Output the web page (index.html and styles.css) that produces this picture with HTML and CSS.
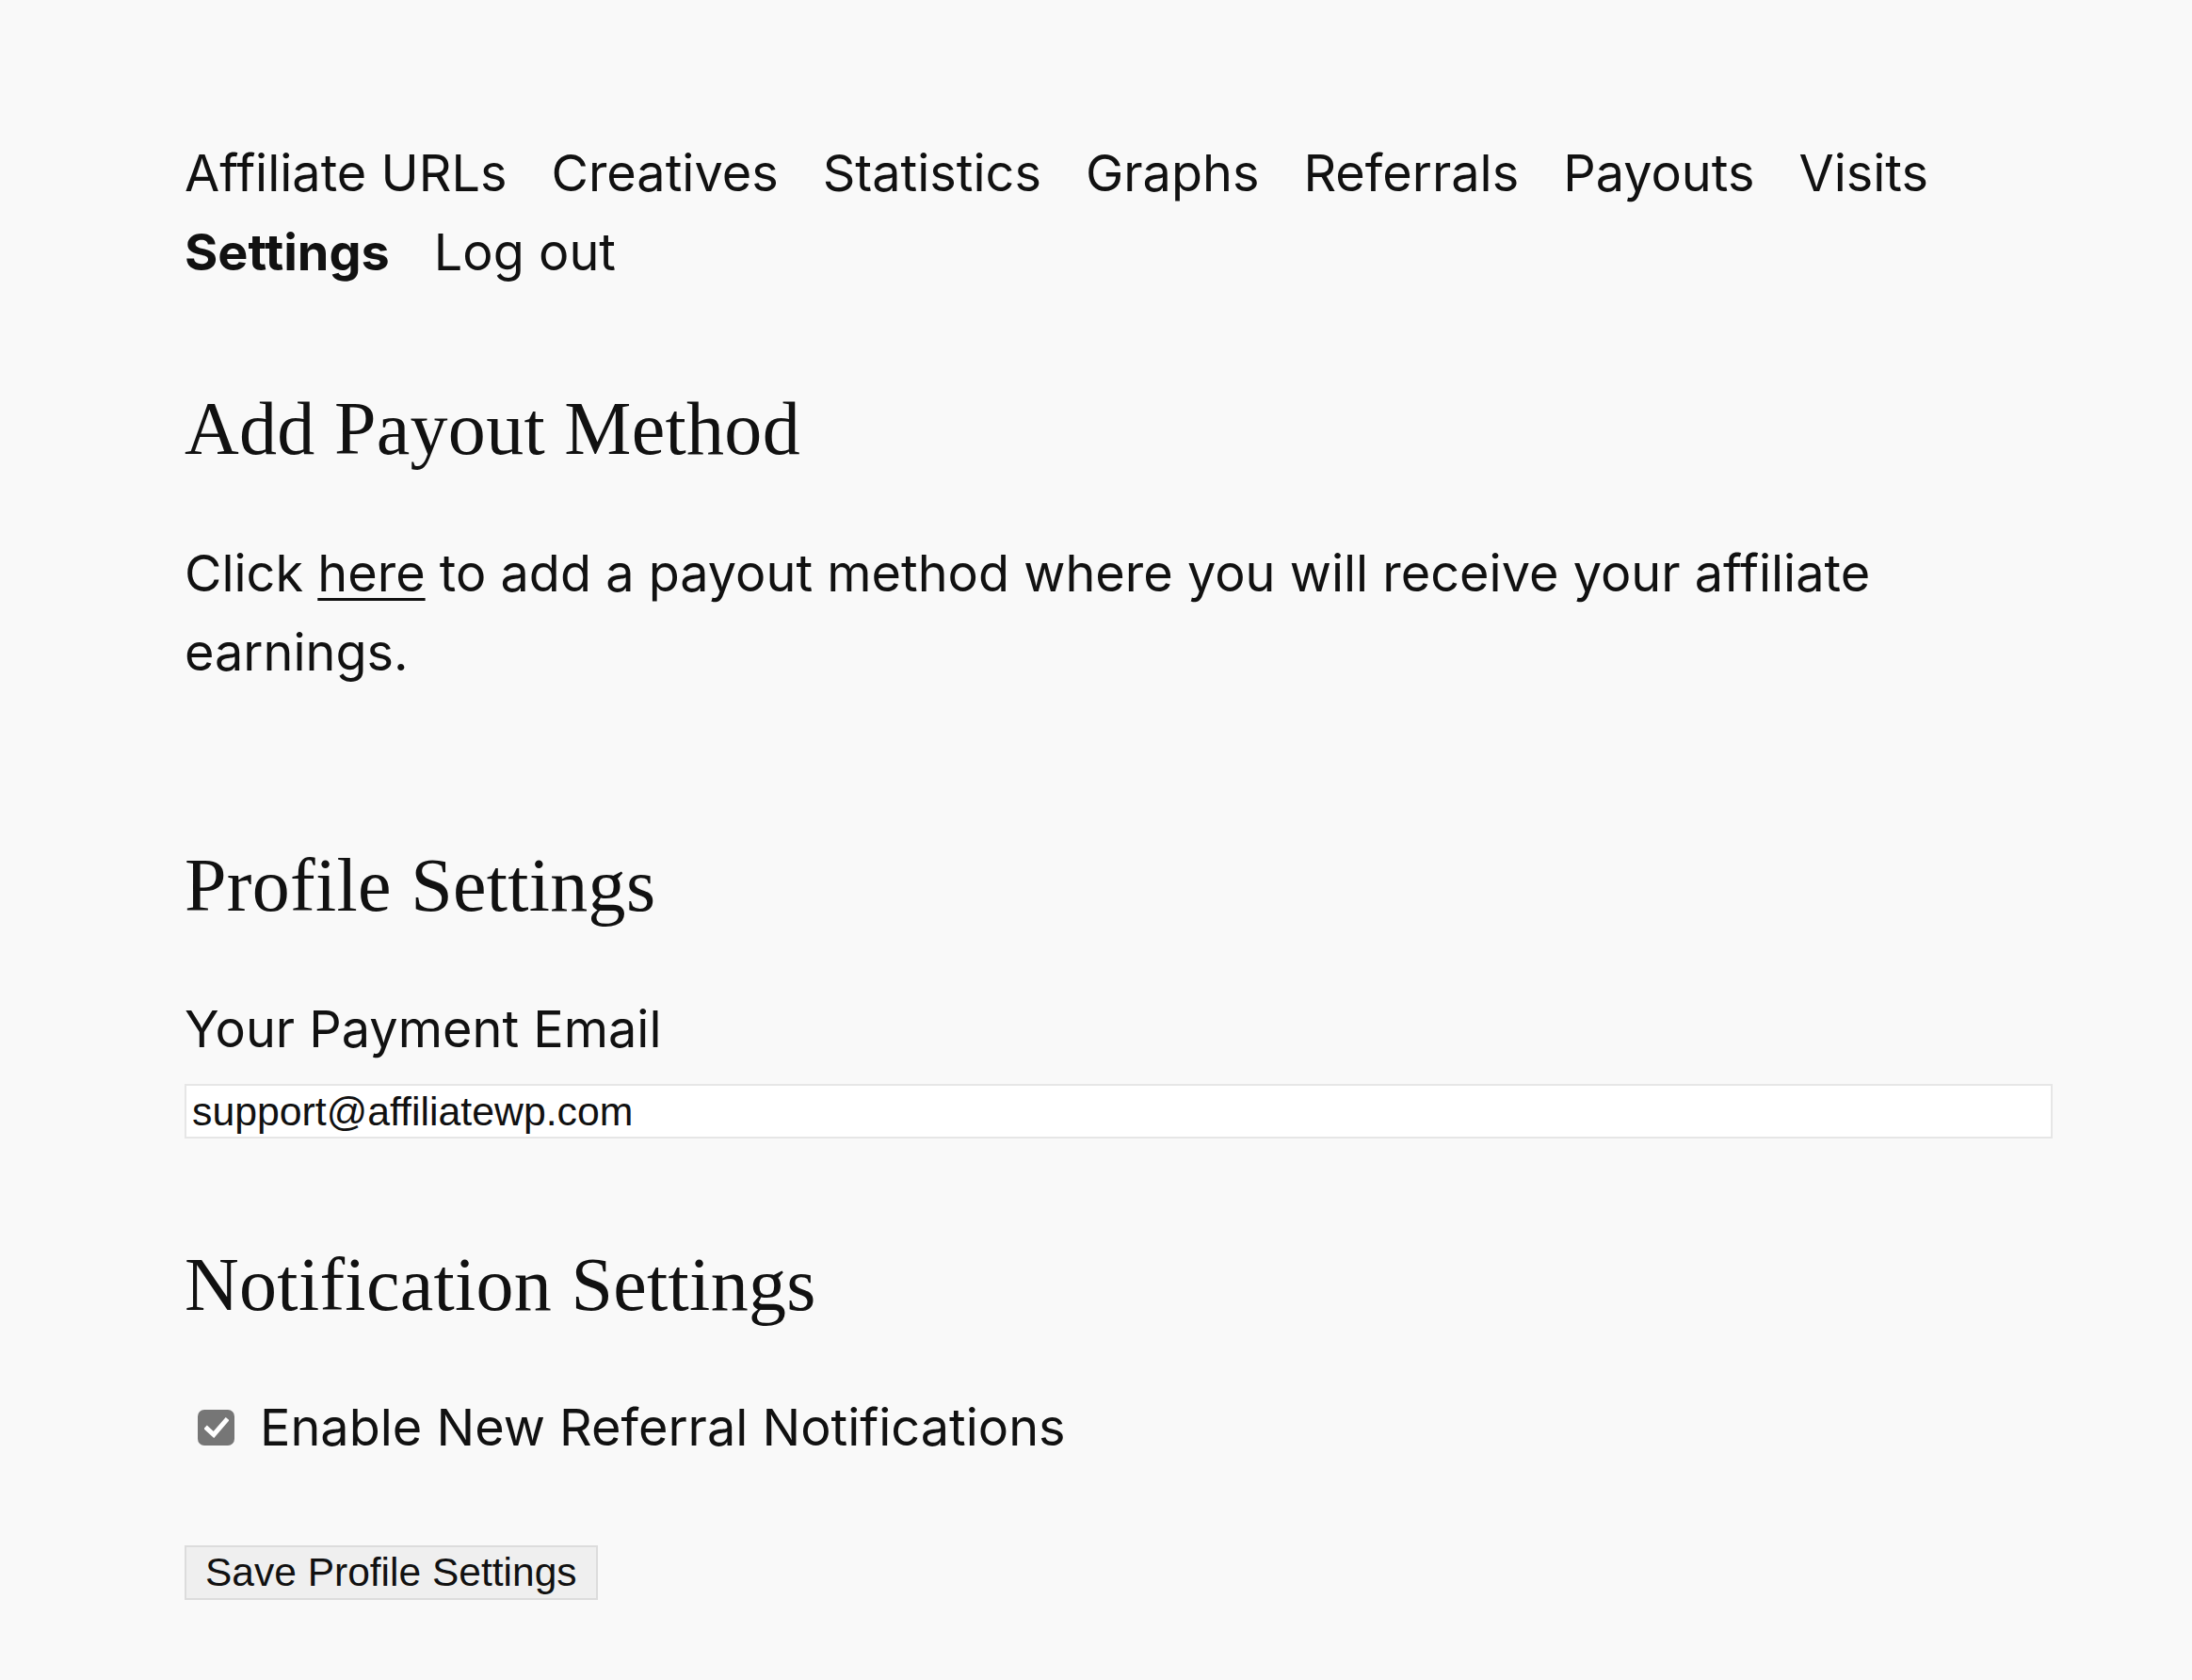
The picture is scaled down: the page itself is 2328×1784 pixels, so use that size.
FILE: index.html
```html
<!DOCTYPE html>
<html lang="en">
<head>
<meta charset="utf-8">
<title>Affiliate Area - Settings</title>
<link rel="stylesheet" href="styles.css">
</head>
<body>
<main class="page">
  <nav class="tabs">
    <a class="tab" href="#">Affiliate URLs</a>
    <a class="tab" href="#">Creatives</a>
    <a class="tab" href="#">Statistics</a>
    <a class="tab" href="#">Graphs</a>
    <a class="tab" href="#">Referrals</a>
    <a class="tab" href="#">Payouts</a>
    <a class="tab" href="#">Visits</a>
    <a class="tab tab-active" href="#">Settings</a>
    <a class="tab" href="#">Log out</a>
  </nav>

  <section class="payout">
    <h2 class="heading">Add Payout Method</h2>
    <p class="text">Click <a class="link" href="#">here</a> to add a payout method where you will receive your affiliate earnings.</p>
  </section>

  <section class="profile">
    <h2 class="heading">Profile Settings</h2>
    <label class="field-label" for="email">Your Payment Email</label>
    <input class="field-input" id="email" type="email" value="support@affiliatewp.com">
  </section>

  <section class="notify">
    <h2 class="heading">Notification Settings</h2>
    <label class="check-row">
      <span class="check-box">
        <svg width="26" height="22" viewBox="0 0 26 22"><path d="M3 12 L10 18.5 L23 3.5" fill="none" stroke="#fff" stroke-width="5" stroke-linecap="square" stroke-linejoin="miter"/></svg>
      </span>
      <span class="check-text">Enable New Referral Notifications</span>
    </label>
    <button class="save-btn" type="button">Save Profile Settings</button>
  </section>
</main>
</body>
</html>
```

FILE: styles.css
```css
html, body {
  margin: 0;
  padding: 0;
  background: #f9f9f9;
}

body {
  color: #111;
  font-family: Inter, "Noto Sans", sans-serif;
  font-size: 54px;
  line-height: 84px;
}

.page {
  width: 1984px;
  padding: 142px 0 80px 196px;
}

.tabs {
  display: flex;
  flex-wrap: wrap;
  column-gap: 47px;
  width: 1900px;
}

.tab {
  color: #111;
  text-decoration: none;
}

.tab-active {
  font-weight: 700;
}

.heading {
  font-family: "Liberation Serif", "Times New Roman", serif;
  font-weight: 400;
  font-size: 80px;
  line-height: 96px;
  margin: 0;
  color: #111;
  letter-spacing: 0.3px;
}

.payout {
  margin-top: 97px;
}

.text {
  margin: 64px 0 0;
  width: 1900px;
}

.link {
  color: #111;
  text-decoration: underline;
  text-decoration-thickness: 3px;
  text-underline-offset: 7px;
}

.profile {
  margin-top: 157px;
  display: flex;
  flex-direction: column;
}

.field-label {
  margin-top: 63px;
}

.field-input {
  margin-top: 16px;
  box-sizing: border-box;
  width: 1984px;
  height: 58px;
  border: 2px solid #e6e6e6;
  background: #fff;
  font-family: "Liberation Sans", Arial, sans-serif;
  font-size: 42.8px;
  color: #111;
  padding: 0 6px;
  outline: none;
}

.notify {
  margin-top: 107px;
  display: flex;
  flex-direction: column;
  align-items: flex-start;
}

.check-row {
  margin-top: 62px;
  display: flex;
  align-items: center;
  gap: 27px;
}

.check-box {
  width: 39px;
  height: 38px;
  margin-left: 14px;
  background: #767676;
  border-radius: 7px;
  display: flex;
  align-items: center;
  justify-content: center;
}

.save-btn {
  margin-top: 83px;
  height: 58px;
  padding: 0 20px;
  border: 2px solid #dcdcdc;
  background: #efefef;
  font-family: "Liberation Sans", Arial, sans-serif;
  font-size: 42.5px;
  color: #111;
  border-radius: 0;
  cursor: pointer;
}
```
